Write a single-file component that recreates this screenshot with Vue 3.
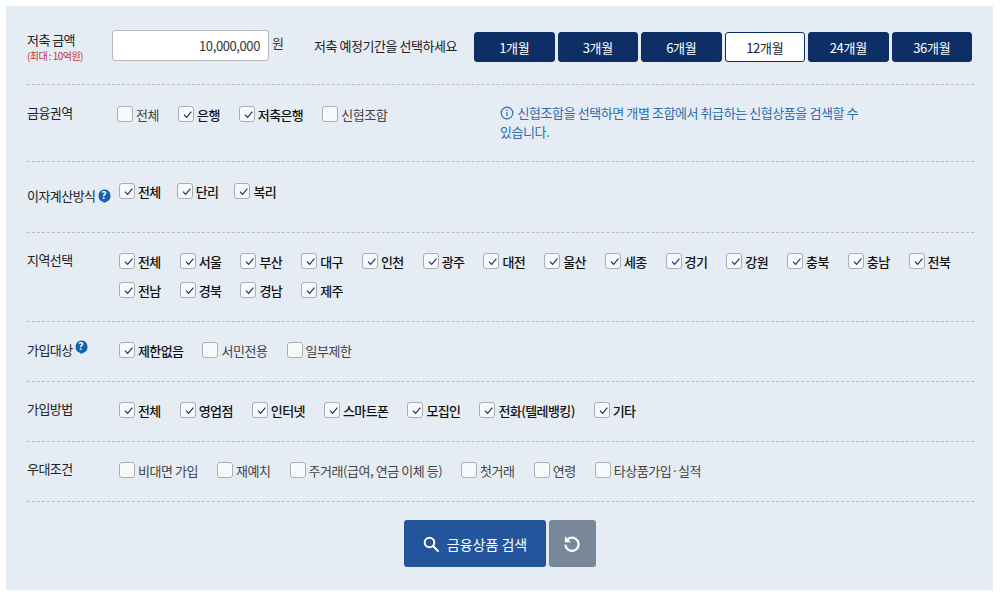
<script setup>
const months = [
  { label: '1개월' }, { label: '3개월' }, { label: '6개월' },
  { label: '12개월', on: true }, { label: '24개월' }, { label: '36개월' },
]
const c = (label, on) => ({ label, on })
const regions = ['전체','서울','부산','대구','인천','광주','대전','울산','세종','경기','강원','충북','충남','전북','전남','경북','경남','제주'].map(r => c(r, true))
const rows = {
  area: [c('전체'), c('은행', true), c('저축은행', true), c('신협조합')],
  interest: [c('전체', true), c('단리', true), c('복리', true)],
  target: [c('제한없음', true), c('서민전용'), c('일부제한')],
  method: ['전체','영업점','인터넷','스마트폰','모집인','전화(텔레뱅킹)','기타'].map(r => c(r, true)),
  perks: [c('비대면 가입'), c('재예치'), c('주거래(급여, 연금 이체 등)'), c('첫거래'), c('연령'), c('타상품가입·실적')],
}
</script>

<template>
  <div class="page">
    <form class="panel" @submit.prevent>
      <section class="row row-top">
        <div class="amount-label">
          <span>저축 금액</span>
          <small>(최대 : 10억원)</small>
        </div>
        <input class="amount" value="10,000,000" />
        <span class="won">원</span>
        <span class="period">저축 예정기간을 선택하세요</span>
        <div class="months">
          <button v-for="m in months" :key="m.label" type="button" class="month" :class="{ on: m.on }">{{ m.label }}</button>
        </div>
      </section>

      <section class="row row-area">
        <div class="label narrow">금융권역</div>
        <div class="opts area-opts">
          <label v-for="o in rows.area" :key="o.label" class="opt" :class="{ on: o.on }">
            <span class="box"><svg v-if="o.on" viewBox="0 0 14 14"><path d="M5 7.6 L7.6 10.4 L12.4 4.6" /></svg></span>{{ o.label }}
          </label>
        </div>
        <p class="note">
          <svg class="info" viewBox="0 0 14 14"><circle cx="7" cy="7" r="5.8" /><path d="M7 6.2v4M7 3.4v1.5" /></svg>
          신협조합을 선택하면 개별 조합에서 취급하는 신협상품을 검색할 수 있습니다.
        </p>
      </section>

      <section class="row row-interest">
        <div class="label low">이자계산방식<svg class="help" viewBox="0 0 14 14"><path class="help-bg" d="M7 0.4a6.4 6.4 0 0 1 2 12.5L7 14l-1-1.2A6.4 6.4 0 0 1 7 0.4z" /><text x="7" y="10.4" text-anchor="middle">?</text></svg></div>
        <div class="opts tight">
          <label v-for="o in rows.interest" :key="o.label" class="opt" :class="{ on: o.on }">
            <span class="box"><svg v-if="o.on" viewBox="0 0 14 14"><path d="M5 7.6 L7.6 10.4 L12.4 4.6" /></svg></span>{{ o.label }}
          </label>
        </div>
      </section>

      <section class="row">
        <div class="label">지역선택</div>
        <div class="opts">
          <label v-for="o in regions" :key="o.label" class="opt" :class="{ on: o.on }">
            <span class="box"><svg v-if="o.on" viewBox="0 0 14 14"><path d="M5 7.6 L7.6 10.4 L12.4 4.6" /></svg></span>{{ o.label }}
          </label>
        </div>
      </section>

      <section class="row">
        <div class="label">가입대상<svg class="help raised" viewBox="0 0 14 14"><path class="help-bg" d="M7 0.4a6.4 6.4 0 0 1 2 12.5L7 14l-1-1.2A6.4 6.4 0 0 1 7 0.4z" /><text x="7" y="10.4" text-anchor="middle">?</text></svg></div>
        <div class="opts">
          <label v-for="o in rows.target" :key="o.label" class="opt" :class="{ on: o.on }">
            <span class="box"><svg v-if="o.on" viewBox="0 0 14 14"><path d="M5 7.6 L7.6 10.4 L12.4 4.6" /></svg></span>{{ o.label }}
          </label>
        </div>
      </section>

      <section class="row">
        <div class="label">가입방법</div>
        <div class="opts">
          <label v-for="o in rows.method" :key="o.label" class="opt" :class="{ on: o.on }">
            <span class="box"><svg v-if="o.on" viewBox="0 0 14 14"><path d="M5 7.6 L7.6 10.4 L12.4 4.6" /></svg></span>{{ o.label }}
          </label>
        </div>
      </section>

      <section class="row">
        <div class="label">우대조건</div>
        <div class="opts">
          <label v-for="o in rows.perks" :key="o.label" class="opt" :class="{ on: o.on }">
            <span class="box"><svg v-if="o.on" viewBox="0 0 14 14"><path d="M5 7.6 L7.6 10.4 L12.4 4.6" /></svg></span>{{ o.label }}
          </label>
        </div>
      </section>

      <div class="actions">
        <button type="button" class="search">
          <svg viewBox="0 0 18 18"><circle cx="7.5" cy="7.5" r="4.8" /><path d="M11 11l5 5" /></svg>
          금융상품 검색
        </button>
        <button type="button" class="reset" aria-label="초기화">
          <svg viewBox="0 0 18 18"><path d="M5.2 4.6A6 6 0 1 1 3 9.6" /><path class="fill" d="M2.6 2v5.4H8z" /></svg>
        </button>
      </div>
    </form>
  </div>
</template>

<style>
html, body { margin: 0; background: #fff; }
</style>

<style scoped>
.page {
  padding: 6px 7px 6px 6px;
  font-family: "Noto Sans CJK KR", "Noto Sans", sans-serif;
  font-size: 13px;
  letter-spacing: -0.55px;
  color: #222;
}
.panel {
  height: 584px;
  box-sizing: border-box;
  background: #e6ecf4;
  padding: 0 19px 0 21px;
}
.row {
  display: flex;
  align-items: flex-start;
  padding: 18px 0 21px;
  border-bottom: 1px dashed #b9bec6;
}
.row-top { padding: 24px 0 21px; }
.amount-label {
  flex: none;
  width: 85px;
  margin-top: 1px;
  display: flex;
  flex-direction: column;
  line-height: 18px;
}
.amount-label small {
  font-size: 10px;
  line-height: 14px;
  color: #c0313a;
}
.amount {
  flex: none;
  width: 157px;
  height: 31px;
  box-sizing: border-box;
  border: 1px solid #b5b8bd;
  border-radius: 3px;
  background: #fff;
  padding: 0 8px;
  text-align: right;
  font: inherit;
  letter-spacing: -0.4px;
  color: #333;
}
.won { flex: none; margin: 3px 0 0 3px; width: 42px; line-height: 20px; font-size: 13px; color: #333; }
.period { flex: none; width: 160px; line-height: 31px; letter-spacing: -0.45px; }
.months { flex: none; width: 498px; display: flex; gap: 3px; margin-top: 2px; }
.month {
  flex: 1;
  height: 30px;
  box-sizing: border-box;
  border: 1px solid #0e2f66;
  border-radius: 3px;
  background: #0e2f66;
  color: #fff;
  font: inherit;
  letter-spacing: -0.3px;
}
.month.on { background: #fff; color: #222; }
.row-area { padding: 19px 0 20px; }
.row-interest { padding: 19px 0 27px; }
.label {
  flex: none;
  width: 92px;
  line-height: 18px;
}
.label.narrow { width: 90px; }
.label.low { padding-top: 6px; }
.opts {
  flex: 1;
  display: flex;
  flex-wrap: wrap;
  gap: 9px 19px;
}
.opts.tight { gap: 9px 16px; }
.area-opts { flex: none; width: 383px; align-content: flex-start; }
.opt {
  display: flex;
  align-items: center;
  gap: 3px;
  height: 20px;
  color: #444;
  letter-spacing: -0.45px;
}
.opt.on { color: #111; font-weight: 500; letter-spacing: -0.6px; }
.box {
  flex: none;
  width: 16px;
  height: 16px;
  box-sizing: border-box;
  border: 1px solid #a9adb4;
  border-radius: 3px;
  background: #f8f9fb;
  display: flex;
}
.box svg { width: 14px; height: 14px; }
.box path { fill: none; stroke: #1d2a6b; stroke-width: 1.1; }
.note {
  margin: -1px 0 0;
  width: 362px;
  color: #2d6cb0;
  line-height: 19px;
  letter-spacing: -0.42px;
}
.info {
  width: 14px;
  height: 14px;
  margin-right: 1px;
  vertical-align: -2px;
  fill: none;
  stroke: #2d6cb0;
  stroke-width: 1.2;
}
.help {
  width: 14px;
  height: 14px;
  margin-left: 2px;
  vertical-align: -2px;
}
.help.raised { vertical-align: 1px; margin-left: 1px; }
.help-bg { fill: #1460b0; }
.help text { fill: #fff; font-size: 10px; font-weight: 700; font-family: "Noto Sans", sans-serif; letter-spacing: 0; }
.actions {
  display: flex;
  justify-content: center;
  gap: 3px;
  padding: 18px 2px 0 0;
}
.search, .reset {
  height: 47px;
  border: 0;
  border-radius: 3px;
  color: #fff;
  font: inherit;
  display: flex;
  align-items: center;
  justify-content: center;
}
.search {
  width: 142px;
  background: #22559c;
  font-size: 14px;
  letter-spacing: 0;
  gap: 7px;
}
.search svg { width: 18px; height: 18px; fill: none; stroke: #fff; stroke-width: 2; stroke-linecap: round; }
.reset { width: 47px; background: #78879a; padding: 0; }
.reset svg { width: 20px; height: 20px; fill: none; stroke: #fff; stroke-width: 2; }
.reset .fill { fill: #fff; stroke: none; }
</style>
